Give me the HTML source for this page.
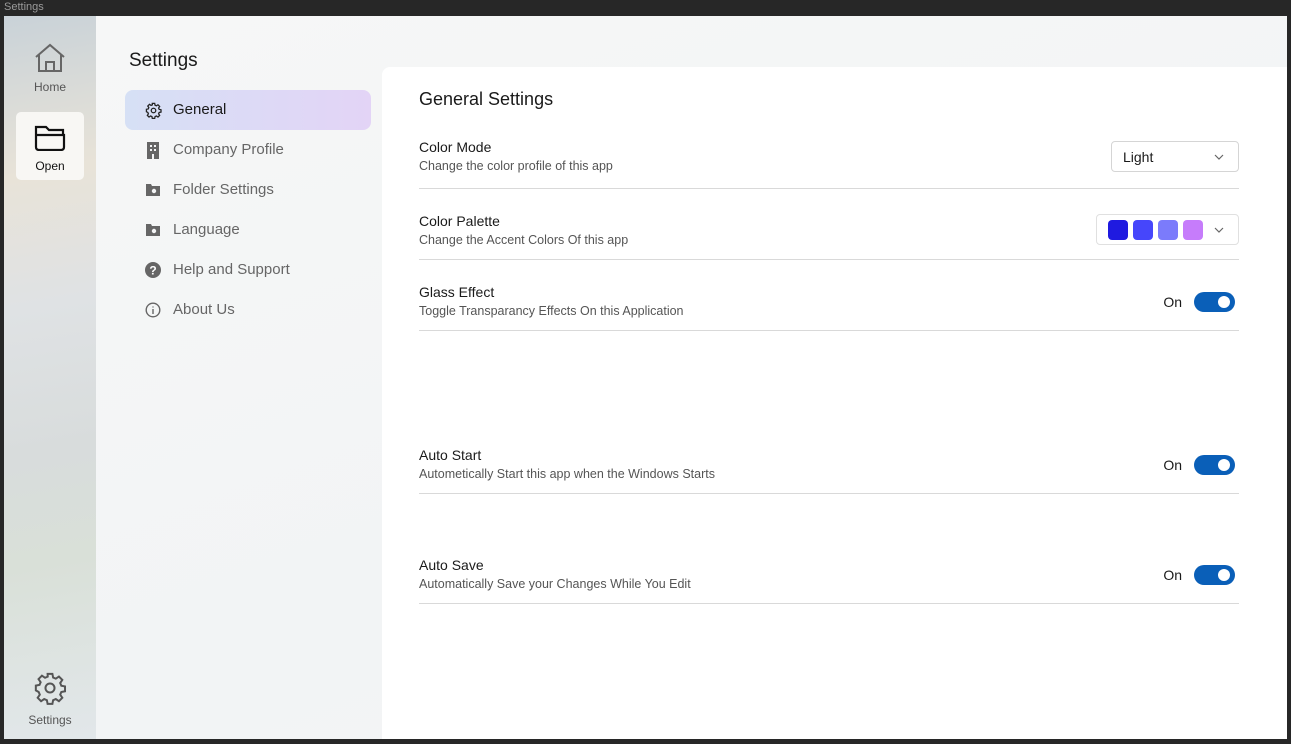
<!DOCTYPE html>
<html><head><style>
*{margin:0;padding:0;box-sizing:border-box}
body{width:1291px;height:744px;background:#272727;font-family:"Liberation Sans",sans-serif;position:relative;overflow:hidden}
.title{position:absolute;left:4px;top:1px;font-size:11px;color:#9a9a9a}
.win{position:absolute;left:4px;top:16px;width:1283px;height:723px;background:#f4f5f6;overflow:hidden}
.rail{position:absolute;left:0;top:0;width:92px;height:723px;background:linear-gradient(170deg,#c9d2d8 0%,#e8e3d8 22%,#dfe2e4 40%,#d8dcdc 60%,#d9e0d8 75%,#e2e7ea 100%)}
.ri{position:absolute;left:12px;width:68px;text-align:center;font-size:12px;color:#555}
.panel{position:absolute;left:92px;top:0;width:1191px;height:723px;background:linear-gradient(160deg,#f6f7f7,#f2f4f5 60%,#f5f6f6)}
.main{position:absolute;left:378px;top:51px;width:905px;height:672px;background:#fff;border-top-left-radius:8px}
h1{position:absolute;left:125px;top:34px;font-size:19px;font-weight:normal;color:#1a1a1a}
.nav{position:absolute;left:121px;width:246px;height:40px;border-radius:8px;font-size:15px;color:#666;padding-left:48px;line-height:40px}
.nav svg{position:absolute;left:20px;top:12px}
.nav.act{background:linear-gradient(90deg,#d6e0f5,#e3d4f6);color:#1a1a1a}
h2{position:absolute;left:415px;top:73px;font-size:18px;font-weight:normal;color:#1a1a1a}
.row{position:absolute;left:415px;width:820px;border-bottom:1px solid #d9d9d9}
.row .t{font-size:14px;color:#1a1a1a}
.row .s{font-size:12.5px;color:#555;margin-top:4px}
.tog{position:absolute;right:4px;width:41px;height:20px;border-radius:10px;background:#0a5fb8}
.tog::after{content:"";position:absolute;right:5px;top:4px;width:12px;height:12px;border-radius:50%;background:#fff}
.on{position:absolute;right:57px;font-size:14px;color:#1a1a1a}
</style></head><body>
<div class="title">Settings</div>
<div class="win">
<div class="rail">
 <svg style="position:absolute;left:30px;top:27px" width="32" height="30" viewBox="0 0 32 30" fill="none" stroke="#666" stroke-width="2"><path d="M2 14L16 2l14 12M5 12v16h22V12M12 28v-9h8v9"/></svg>
 <div class="ri" style="top:64px">Home</div>
 <div style="position:absolute;left:12px;top:96px;width:68px;height:68px;background:#f8f7f4;border-radius:5px"></div>
 <svg style="position:absolute;left:30px;top:107px" width="32" height="28" viewBox="0 0 32 28" fill="none" stroke="#111" stroke-width="2.2"><path d="M2 24V4h10l3 3h14v5M2 24c0 2 1 3 3 3h22c2 0 3-1 3-3V12H2z"/></svg>
 <div class="ri" style="top:143px;color:#111">Open</div>
 <svg style="position:absolute;left:29px;top:655px" width="34" height="34" viewBox="0 0 24 24" fill="none" stroke="#555" stroke-width="1.4"><circle cx="12" cy="12" r="3.2"/><path d="M10.3 2h3.4l.5 2.6 1.9.8 2.2-1.5 2.4 2.4-1.5 2.2.8 1.9 2.6.5v3.4l-2.6.5-.8 1.9 1.5 2.2-2.4 2.4-2.2-1.5-1.9.8-.5 2.6h-3.4l-.5-2.6-1.9-.8-2.2 1.5-2.4-2.4 1.5-2.2-.8-1.9L2 13.7v-3.4l2.6-.5.8-1.9-1.5-2.2 2.4-2.4 2.2 1.5 1.9-.8z"/></svg>
 <div class="ri" style="top:697px">Settings</div>
</div>
<div class="panel"></div>
<h1>Settings</h1>
<div class="nav act" style="top:74px"><svg width="17" height="17" viewBox="0 0 24 24" fill="none" stroke="#222" stroke-width="1.8"><circle cx="12" cy="12" r="3.2"/><path d="M10.3 2h3.4l.5 2.6 1.9.8 2.2-1.5 2.4 2.4-1.5 2.2.8 1.9 2.6.5v3.4l-2.6.5-.8 1.9 1.5 2.2-2.4 2.4-2.2-1.5-1.9.8-.5 2.6h-3.4l-.5-2.6-1.9-.8-2.2 1.5-2.4-2.4 1.5-2.2-.8-1.9L2 13.7v-3.4l2.6-.5.8-1.9-1.5-2.2 2.4-2.4 2.2 1.5 1.9-.8z"/></svg>General</div>
<div class="nav" style="top:114px"><svg width="16" height="17" viewBox="0 0 16 17"><rect x="2" y="0" width="12" height="17" fill="#666"/><rect x="5" y="3" width="2" height="2" fill="#f4f5f6"/><rect x="9" y="3" width="2" height="2" fill="#f4f5f6"/><rect x="5" y="7" width="2" height="2" fill="#f4f5f6"/><rect x="9" y="7" width="2" height="2" fill="#f4f5f6"/><rect x="7" y="12" width="2" height="5" fill="#f4f5f6"/></svg>Company Profile</div>
<div class="nav" style="top:154px"><svg width="16" height="15" viewBox="0 0 16 15"><path d="M1 2h5l1 2h8v10H1z" fill="#666"/><circle cx="9" cy="9" r="2.2" fill="#f4f5f6"/></svg>Folder Settings</div>
<div class="nav" style="top:194px"><svg width="16" height="15" viewBox="0 0 16 15"><path d="M1 2h5l1 2h8v10H1z" fill="#666"/><circle cx="9" cy="9" r="2.2" fill="#f4f5f6"/></svg>Language</div>
<div class="nav" style="top:234px"><svg width="16" height="16" viewBox="0 0 16 16"><circle cx="8" cy="8" r="8" fill="#666"/><text x="8" y="12.5" font-size="12" font-weight="bold" text-anchor="middle" fill="#fff" font-family="Liberation Sans">?</text></svg>Help and Support</div>
<div class="nav" style="top:274px"><svg width="16" height="16" viewBox="0 0 16 16" fill="none" stroke="#666" stroke-width="1.4"><circle cx="8" cy="8" r="6.8"/><path d="M8 7v5M8 4.5v1"/></svg>About Us</div>
<div class="main"></div>
<h2>General Settings</h2>
<div class="row" style="top:123px;height:50px"><div class="t">Color Mode</div><div class="s">Change the color profile of this app</div>
 <div style="position:absolute;right:0;top:2px;width:128px;height:31px;border:1px solid #d5d5d5;border-radius:4px;font-size:14px;color:#1a1a1a;padding:7px 11px">Light<svg style="position:absolute;right:14px;top:12px" width="10" height="6" viewBox="0 0 10 6" fill="none" stroke="#666" stroke-width="1.2"><path d="M1 1l4 4 4-4"/></svg></div></div>
<div class="row" style="top:197px;height:47px"><div class="t">Color Palette</div><div class="s">Change the Accent Colors Of this app</div>
 <div style="position:absolute;right:0;top:1px;width:143px;height:31px;border:1px solid #e0e0e0;border-radius:4px">
 <div style="position:absolute;left:11px;top:5px;width:20px;height:20px;border-radius:4px;background:#1f1ae0"></div>
 <div style="position:absolute;left:36px;top:5px;width:20px;height:20px;border-radius:4px;background:#4646fb"></div>
 <div style="position:absolute;left:61px;top:5px;width:20px;height:20px;border-radius:4px;background:#7b7bfb"></div>
 <div style="position:absolute;left:86px;top:5px;width:20px;height:20px;border-radius:4px;background:#c67cfb"></div>
 <svg style="position:absolute;right:14px;top:12px" width="10" height="6" viewBox="0 0 10 6" fill="none" stroke="#666" stroke-width="1.2"><path d="M1 1l4 4 4-4"/></svg></div></div>
<div class="row" style="top:268px;height:47px"><div class="t">Glass Effect</div><div class="s">Toggle Transparancy Effects On this Application</div><div class="on" style="top:10px">On</div><div class="tog" style="top:8px"></div></div>
<div class="row" style="top:431px;height:47px"><div class="t">Auto Start</div><div class="s">Autometically Start this app when the Windows Starts</div><div class="on" style="top:10px">On</div><div class="tog" style="top:8px"></div></div>
<div class="row" style="top:541px;height:47px"><div class="t">Auto Save</div><div class="s">Automatically Save your Changes While You Edit</div><div class="on" style="top:10px">On</div><div class="tog" style="top:8px"></div></div>
</div>
</body></html>
